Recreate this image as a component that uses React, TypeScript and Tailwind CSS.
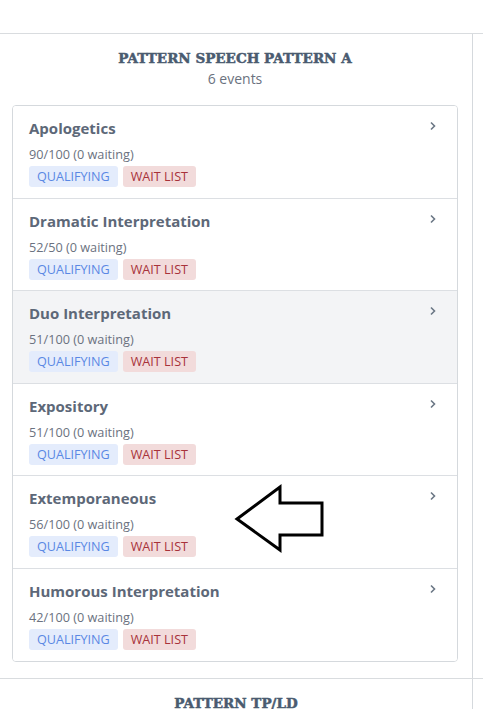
import React from "react";

const events = [
  { name: "Apologetics", stat: "90/100 (0 waiting)" },
  { name: "Dramatic Interpretation", stat: "52/50 (0 waiting)" },
  { name: "Duo Interpretation", stat: "51/100 (0 waiting)", hover: true },
  { name: "Expository", stat: "51/100 (0 waiting)" },
  { name: "Extemporaneous", stat: "56/100 (0 waiting)" },
  { name: "Humorous Interpretation", stat: "42/100 (0 waiting)" },
];

function Chevron() {
  return (
    <svg width="8" height="10" viewBox="0 0 8 10" className="mt-[4px]">
      <path d="M2 1.5 L5.5 5 L2 8.5" fill="none" stroke="#6b7785" strokeWidth="1.6" />
    </svg>
  );
}

export default function App() {
  return (
    <div className="relative w-[483px] h-[709px] overflow-hidden bg-white" style={{ fontFamily: "'Open Sans', sans-serif" }}>
      <div className="h-[33px]" />
      <div className="flex border-t border-[#d9dcdf]">
        <div className="w-[473px] border-r-[1.5px] border-[#d5d9dd] pl-3 pr-[14px] pt-[14px] pb-[16px]">
          <div className="text-center text-[13.5px] leading-[21px] font-bold text-[#4a5b70] [-webkit-text-stroke:0.5px_#4a5b70]" style={{ fontFamily: "'DejaVu Serif', serif" }}>
            PATTERN SPEECH PATTERN A
          </div>
          <div className="text-center text-[14px] leading-[20px] text-[#6b7280]">6 events</div>
          <div className="mt-[16px] border border-[#d5d9dd] rounded-[4px] overflow-hidden">
            {events.map((e, i) => (
              <div
                key={e.name}
                className={`flex pl-[16px] pr-[20px] pt-[11px] pb-[10.6px] ${i > 0 ? "border-t border-[#dcdfe3]" : ""} ${e.hover ? "bg-[#f3f4f6]" : "bg-white"}`}
              >
                <div className="flex-1">
                  <div className="text-[15px] leading-[22px] font-bold text-[#5d6878]">{e.name}</div>
                  <div className="mt-[6px] text-[12.7px] leading-[18px] text-[#6b7280]">{e.stat}</div>
                  <div className="mt-[3px] flex gap-[5px]">
                    <span className="h-[21px] px-[8px] rounded-[3px] bg-[#e4ecfc] text-[#5a88e4] text-[12.6px] leading-[21px]">QUALIFYING</span>
                    <span className="h-[21px] px-[8px] rounded-[3px] bg-[#f2dbdb] text-[#a8323a] text-[12.6px] leading-[21px]">WAIT LIST</span>
                  </div>
                </div>
                <Chevron />
              </div>
            ))}
          </div>
        </div>
        <div className="flex-1" />
      </div>
      <div className="flex border-t-[1.5px] border-[#d9dcdf]">
        <div className="w-[473px] border-r-[1.5px] border-[#d5d9dd] pt-[14px] pb-4">
          <div className="text-center text-[13.5px] leading-[21px] font-bold text-[#4a5b70] [-webkit-text-stroke:0.5px_#4a5b70]" style={{ fontFamily: "'DejaVu Serif', serif" }}>
            PATTERN TP/LD
          </div>
        </div>
        <div className="flex-1" />
      </div>
      <svg className="absolute left-0 top-0 pointer-events-none" width="483" height="709">
        <polygon
          points="237,519 280,487 280,503 322,503 322,535 280,535 280,550"
          fill="white"
          stroke="black"
          strokeWidth="3"
          strokeLinejoin="miter"
        />
      </svg>
    </div>
  );
}
